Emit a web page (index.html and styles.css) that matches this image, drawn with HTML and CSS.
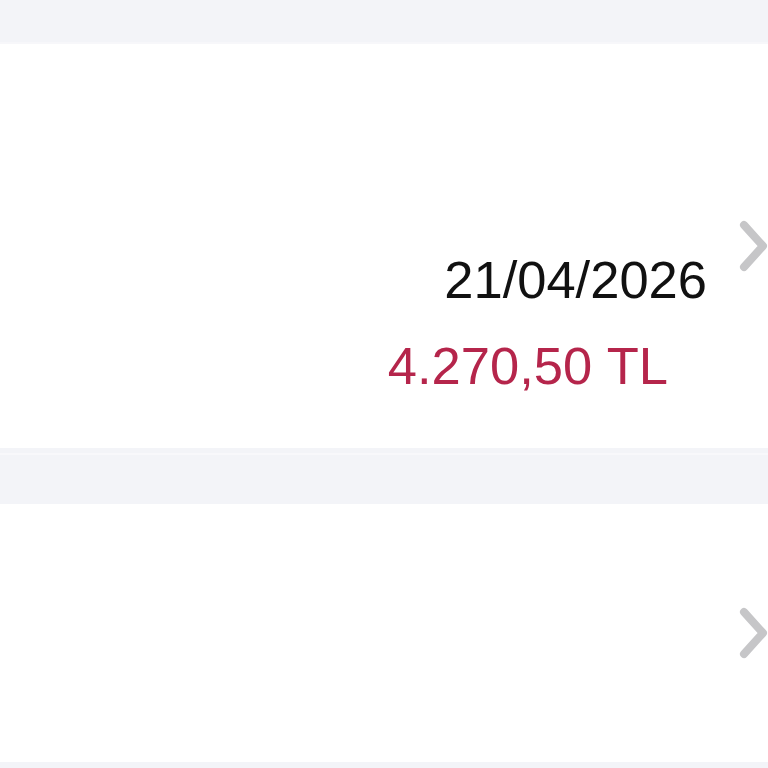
FILE: index.html
```html
<!DOCTYPE html>
<html lang="tr">
 <head>
  <meta charset="utf-8"/>
  <meta content="width=device-width, initial-scale=1.0" name="viewport"/>
  <title>Ödemeler</title>
  <link rel="stylesheet" href="styles.css">
 </head>
 <body>
  <div class="band band-top"></div>
  <section class="row row-large">
   <div class="info">
    <span class="date">21/04/2026</span>
    <span class="amount">4.270,50&nbsp;TL</span>
   </div>
   <svg class="chevron" width="29" height="52" viewBox="0 0 29 52">
    <polyline points="5,5 24,26 5,47" fill="none" stroke="#c6c6c8" stroke-width="8" stroke-linecap="round" stroke-linejoin="round"/>
   </svg>
  </section>
  <div class="band band-gap"></div>
  <section class="row row-small">
   <div class="info"></div>
   <svg class="chevron" width="29" height="52" viewBox="0 0 29 52">
    <polyline points="5,5 24,26 5,47" fill="none" stroke="#c6c6c8" stroke-width="8" stroke-linecap="round" stroke-linejoin="round"/>
   </svg>
  </section>
  <div class="band band-bottom"></div>
 </body>
</html>
```

FILE: styles.css
```css
:root {
  --bg: #f3f4f8;
  --card: #ffffff;
  --text: #111111;
  --red: #b5254b;
  --font: "Liberation Sans", Arial, sans-serif;
}

* {
  margin: 0;
  padding: 0;
  box-sizing: border-box;
}

html, body {
  background: var(--bg);
  font-family: var(--font);
  color: var(--text);
}

.band-top {
  height: 44px;
  border-bottom: 2px solid #f7f7fa;
}

.band-gap {
  height: 56px;
  background: linear-gradient(to bottom, var(--bg) 0, var(--bg) 5px, #f8f8fb 5px, #f8f8fb 7px, var(--bg) 7px);
}

.band-bottom {
  height: 6px;
}

.row {
  background: var(--card);
  display: flex;
  align-items: flex-start;
  justify-content: flex-end;
}

.row-large {
  height: 404px;
}

.row-small {
  height: 258px;
}

.info {
  display: flex;
  flex-direction: column;
  align-items: flex-end;
  padding-top: 206px;
}

.date {
  font-size: 52.5px;
  line-height: 60px;
  color: var(--text);
}

.amount {
  font-size: 52.5px;
  line-height: 60px;
  color: var(--red);
  margin-top: 26px;
  margin-right: 39px;
}

.chevron {
  align-self: center;
  margin-left: 32px;
  flex-shrink: 0;
}
```
